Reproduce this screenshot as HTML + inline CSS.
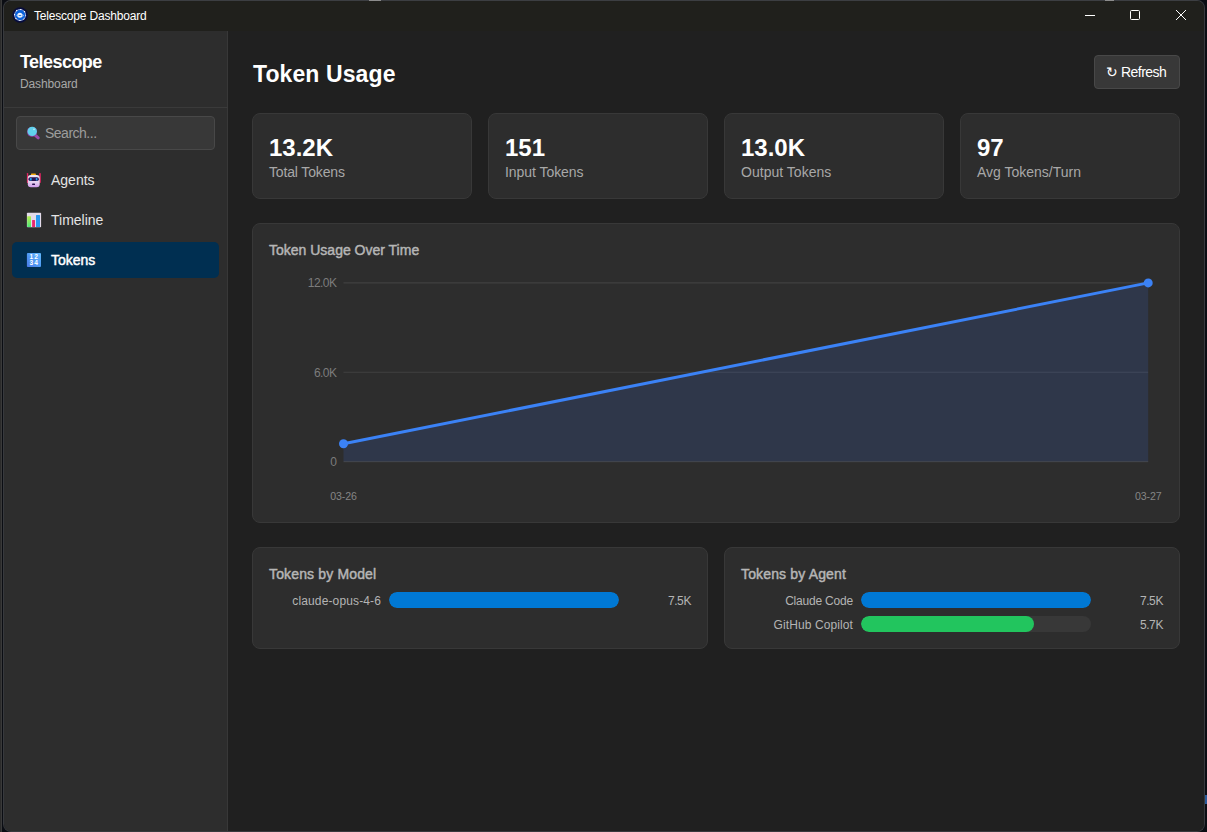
<!DOCTYPE html>
<html lang="en">
<head>
<meta charset="utf-8">
<title>Telescope Dashboard</title>
<style>
*{box-sizing:border-box;margin:0;padding:0}
html,body{width:1207px;height:832px;overflow:hidden;background:#15171c;font-family:"Liberation Sans",sans-serif;color:#f0f0f0}
.abs{position:absolute}
#desk{position:absolute;left:0;top:0;width:1207px;height:832px;background:#0b0d13;border-left:1px solid #2b2b2b}
#desk i{position:absolute;display:block}
#win{position:absolute;left:3px;top:0;width:1202px;height:832px;border-radius:8px;background:#202020;border:1px solid #383a3e;border-top-color:#3c3e42;overflow:hidden}
#titlebar{position:absolute;left:0;top:0;width:1200px;height:30px;background:#20201c}
#titlebar .ttl{position:absolute;left:30px;top:8px;font-size:12px;line-height:14px;color:#fff;white-space:nowrap;letter-spacing:-0.19px}
#sidebar{position:absolute;left:0;top:30px;width:224px;height:800px;background:#2d2d2d;border-right:1px solid #383838}
#main{position:absolute;left:224px;top:30px;width:976px;height:800px;background:#202020}
.brand{position:absolute;left:16px;top:21px;font-size:18px;font-weight:bold;line-height:20px;color:#fff;white-space:nowrap;letter-spacing:-0.55px}
.sub{position:absolute;left:16px;top:46px;font-size:12px;line-height:14px;color:#a8a8a8;white-space:nowrap;letter-spacing:-0.12px}
.divider{position:absolute;left:0;top:76px;width:224px;height:1px;background:#3a3a3a}
.search{position:absolute;left:12px;top:85px;width:199px;height:34px;background:#383838;border:1px solid #484848;border-radius:4px}
.search span{position:absolute;left:28px;top:8px;font-size:14px;line-height:16px;color:#9d9d9d;white-space:nowrap;letter-spacing:-0.5px}
.nav{position:absolute;left:8px;width:207px;height:36px;border-radius:5px}
.nav.active{background:#002f51}
.nav span{position:absolute;left:39px;top:10px;font-size:14px;line-height:16px;color:#e4e4e4;white-space:nowrap}
.nav.active span{color:#fff;-webkit-text-stroke:0.45px #fff}
.nav svg{position:absolute;left:14px;top:10px}
h1{position:absolute;left:25px;top:30px;font-size:23px;line-height:26px;letter-spacing:0.1px;font-weight:bold;color:#fff;white-space:nowrap}
.btn{position:absolute;left:866px;top:24px;width:86px;height:34px;background:#383838;border:1px solid #484848;border-radius:4px}
.btn span{position:absolute;left:11px;top:8px;font-size:14px;line-height:16px;color:#fff;white-space:nowrap;letter-spacing:-0.5px}
.card{position:absolute;background:#2d2d2d;border:1px solid #383838;border-radius:8px}
.stat .v{position:absolute;left:16px;top:20px;font-size:24px;line-height:28px;font-weight:bold;color:#fff;white-space:nowrap}
.stat .l{position:absolute;left:16px;top:50px;font-size:14px;line-height:16px;color:#a8a8a8;white-space:nowrap;letter-spacing:-0.15px}
.ct{position:absolute;left:16px;top:18px;font-size:14px;line-height:16px;color:#b6b6b6;-webkit-text-stroke:0.45px #b6b6b6;white-space:nowrap}
.row{position:absolute;left:0;height:16px;width:100%}
.row .n{position:absolute;left:16px;top:1px;width:112px;text-align:right;font-size:12px;line-height:16px;color:#b4b4b4;white-space:nowrap}
.row .t{position:absolute;left:136px;top:0;width:230px;height:16px;border-radius:8px;background:#383838;overflow:hidden}
.row .f{height:16px;border-radius:8px}
.row .x{position:absolute;right:16px;top:1px;letter-spacing:-0.4px;font-size:12px;line-height:16px;color:#b4b4b4;white-space:nowrap}
</style>
</head>
<body>
<div id="desk"><i style="left:0;top:0;width:1px;height:832px;background:#3a3a3a"></i><i style="left:1204px;top:795px;width:2px;height:9px;background:#2a5a9a"></i></div>
<div id="win">
  <div id="titlebar">
    <svg class="abs" style="left:8px;top:6px" width="16" height="16" viewBox="0 0 16 16">
      <circle cx="8.1" cy="8" r="7.7" fill="#070c3c"/>
      <circle cx="8.1" cy="8" r="5.5" fill="#0b5fd8" stroke="#98a8d8" stroke-width="0.9"/>
      <circle cx="8.1" cy="8" r="5.5" fill="none" stroke="#ffffff" stroke-width="1.1" stroke-dasharray="1.2 3.12" stroke-dashoffset="0.6"/>
      <circle cx="8.1" cy="8" r="4.7" fill="#0a62dc"/>
      <circle cx="7.9" cy="8.3" r="2.5" fill="#f4f7ff"/>
      <ellipse cx="8.2" cy="8.5" rx="3.6" ry="1" fill="none" stroke="#d8e6ff" stroke-width="0.5"/>
      <rect x="6.5" y="8" width="2.9" height="0.8" rx="0.4" fill="#0a63c8"/>
    </svg>
    <div class="ttl">Telescope Dashboard</div>
    <svg class="abs" style="left:1080px;top:8px" width="12" height="12" viewBox="0 0 12 12"><path d="M1 6.5H11" stroke="#fff" stroke-width="1" fill="none"/></svg>
    <svg class="abs" style="left:1125px;top:8px" width="12" height="12" viewBox="0 0 12 12"><rect x="1.5" y="1.5" width="9" height="9" rx="1" stroke="#fff" stroke-width="1" fill="none"/></svg>
    <svg class="abs" style="left:1171px;top:8px" width="12" height="12" viewBox="0 0 12 12"><path d="M1 1L11 11M11 1L1 11" stroke="#fff" stroke-width="1" fill="none"/></svg>
  </div>
  <div id="sidebar">
    <div class="brand">Telescope</div>
    <div class="sub">Dashboard</div>
    <div class="divider"></div>
    <div class="search"><svg class="abs" style="left:7.2px;top:6px" width="18" height="18" viewBox="0 0 18 18"><path d="M10.6 11.6L14.2 14.8" stroke="#9a4aa8" stroke-width="3.1" stroke-linecap="round"/><circle cx="8" cy="8.9" r="5" fill="#8a3a9c"/><circle cx="8.2" cy="8.4" r="4.7" fill="#60d0ec"/><circle cx="10" cy="6.3" r="0.9" fill="#b8ecf8"/></svg><span>Search...</span></div>
    <div class="nav" style="top:131px"><svg width="16" height="16" viewBox="0 0 16 16"><defs><linearGradient id="rg" x1="0" y1="0" x2="0" y2="1"><stop offset="0" stop-color="#f1e9f5"/><stop offset="0.6" stop-color="#e3d0ee"/><stop offset="1" stop-color="#d29bee"/></linearGradient></defs><rect x="0.9" y="1" width="1.3" height="10" rx="0.6" fill="#e32562"/><rect x="13.2" y="1" width="1.6" height="10" rx="0.7" fill="#e32562"/><rect x="5" y="1.4" width="4.9" height="2" rx="0.7" fill="#f6a90a"/><rect x="1.8" y="2.9" width="11.9" height="12.3" rx="3" fill="url(#rg)"/><rect x="2.4" y="5.3" width="10.5" height="3.7" rx="1.8" fill="#2b1452"/><rect x="3.9" y="6" width="1.8" height="2.4" rx="0.5" fill="#20a0ec"/><rect x="9.8" y="6" width="1.6" height="2.4" rx="0.5" fill="#20a0ec"/><rect x="6.1" y="11.6" width="2.9" height="1.3" rx="0.5" fill="#2b1452"/></svg><span>Agents</span></div>
    <div class="nav" style="top:171px"><svg width="16" height="16" viewBox="0 0 16 16"><defs><linearGradient id="cg" x1="0" y1="0" x2="0" y2="1"><stop offset="0" stop-color="#b4ec4c"/><stop offset="1" stop-color="#4ee876"/></linearGradient></defs><rect x="0.9" y="0.8" width="14.2" height="14.4" rx="0.8" fill="#e3dbea"/><rect x="1.2" y="4.2" width="3.8" height="10.8" rx="0.5" fill="url(#cg)"/><rect x="6.1" y="8" width="2.9" height="7" rx="0.5" fill="#e8286e"/><rect x="10" y="2.9" width="4" height="12.1" rx="0.5" fill="#2a98f0"/></svg><span>Timeline</span></div>
    <div class="nav active" style="top:211px"><svg width="16" height="16" viewBox="0 0 16 16"><defs><linearGradient id="tg" x1="0" y1="1" x2="1" y2="0"><stop offset="0" stop-color="#4a7ae8"/><stop offset="0.5" stop-color="#4f9af4"/><stop offset="1" stop-color="#62bafc"/></linearGradient></defs><rect x="0.9" y="0.9" width="14.1" height="14.1" rx="1" fill="url(#tg)"/><g font-family="Liberation Sans, sans-serif" font-weight="bold" font-size="6.6" fill="#fff" text-anchor="middle"><text x="5.3" y="7">1</text><text x="10.2" y="7">2</text><text x="5.3" y="13">3</text><text x="10.2" y="13">4</text></g></svg><span>Tokens</span></div>
  </div>
  <div id="main">
    <h1>Token Usage</h1>
    <div class="btn"><span>↻ Refresh</span></div>
    <div class="card stat" style="left:24px;top:82px;width:220px;height:86px"><div class="v">13.2K</div><div class="l">Total Tokens</div></div>
    <div class="card stat" style="left:260px;top:82px;width:220px;height:86px"><div class="v">151</div><div class="l" style="letter-spacing:-0.05px">Input Tokens</div></div>
    <div class="card stat" style="left:496px;top:82px;width:220px;height:86px"><div class="v">13.0K</div><div class="l" style="letter-spacing:0.02px">Output Tokens</div></div>
    <div class="card stat" style="left:732px;top:82px;width:220px;height:86px"><div class="v">97</div><div class="l" style="letter-spacing:0">Avg Tokens/Turn</div></div>
    <div class="card" id="chart" style="left:24px;top:192px;width:928px;height:300px"><div class="ct">Token Usage Over Time</div>
      <svg class="abs" style="left:0;top:0" width="926" height="298" viewBox="0 0 926 298">
        <g stroke="#404040" stroke-width="1.1">
          <line x1="90.5" y1="58.9" x2="895.2" y2="58.9"/>
          <line x1="90.5" y1="148.3" x2="895.2" y2="148.3"/>
          <line x1="90.5" y1="237.6" x2="895.2" y2="237.6"/>
        </g>
        <path d="M90.5 219.75L895.2 58.9V237.6H90.5Z" fill="#4072e8" fill-opacity="0.16"/>
        <path d="M90.5 219.75L895.2 58.9" stroke="#3b82f6" stroke-width="3" fill="none"/>
        <circle cx="90.5" cy="219.75" r="4.5" fill="#3b82f6"/>
        <circle cx="895.2" cy="58.9" r="4.5" fill="#3b82f6"/>
        <g font-family="Liberation Sans, sans-serif" font-size="12" letter-spacing="-0.55" fill="#7c7c7c" text-anchor="end">
          <text x="83.4" y="63.2">12.0K</text>
          <text x="83.4" y="152.6">6.0K</text>
          <text x="83.4" y="241.9">0</text>
        </g>
        <g font-family="Liberation Sans, sans-serif" font-size="10.6" letter-spacing="-0.1" fill="#858585" text-anchor="middle">
          <text x="90.5" y="275.5">03-26</text>
          <text x="895.2" y="275.5">03-27</text>
        </g>
      </svg>
    </div>
    <div class="card" style="left:24px;top:516px;width:456px;height:102px"><div class="ct" style="letter-spacing:0.15px">Tokens by Model</div>
      <div class="row" style="top:44px"><div class="n" style="letter-spacing:0.13px">claude-opus-4-6</div><div class="t"><div class="f" style="width:100%;background:#0078d4"></div></div><div class="x">7.5K</div></div>
    </div>
    <div class="card" style="left:496px;top:516px;width:456px;height:102px"><div class="ct" style="letter-spacing:0.15px">Tokens by Agent</div>
      <div class="row" style="top:44px"><div class="n" style="letter-spacing:-0.2px">Claude Code</div><div class="t"><div class="f" style="width:100%;background:#0078d4"></div></div><div class="x">7.5K</div></div>
      <div class="row" style="top:68px"><div class="n" style="letter-spacing:0.1px">GitHub Copilot</div><div class="t"><div class="f" style="width:75%;background:#22c55e"></div></div><div class="x">5.7K</div></div>
    </div>
  </div>
</div>
<div class="abs" style="left:369px;top:0;width:12px;height:1px;background:#8c8c8c"></div>
<div class="abs" style="left:1105px;top:0;width:9px;height:1px;background:#8c8c8c"></div>
</body>
</html>
